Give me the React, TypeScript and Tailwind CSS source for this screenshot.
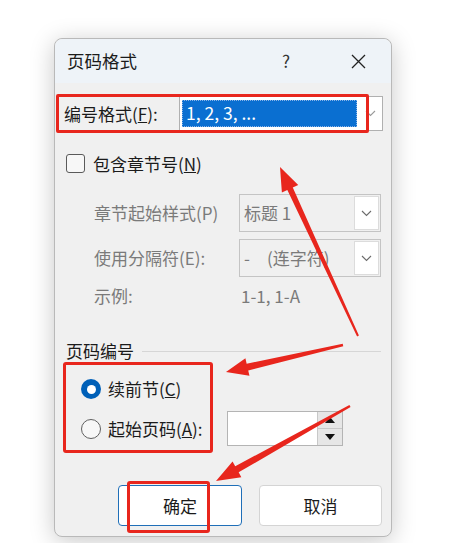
import React from 'react';

const RED = '#e8261d';

function arrowPoints(tip: [number, number], tail: [number, number], headLen: number, headHalf: number, neck: number, end: number) {
  const dx = tail[0] - tip[0];
  const dy = tail[1] - tip[1];
  const len = Math.hypot(dx, dy);
  const ux = dx / len;
  const uy = dy / len;
  const nx = -uy;
  const ny = ux;
  const bx = tip[0] + ux * headLen;
  const by = tip[1] + uy * headLen;
  const pts: [number, number][] = [
    tip,
    [bx + nx * headHalf, by + ny * headHalf],
    [bx + nx * neck, by + ny * neck],
    [tail[0] + nx * end, tail[1] + ny * end],
    [tail[0] - nx * end, tail[1] - ny * end],
    [bx - nx * neck, by - ny * neck],
    [bx - nx * headHalf, by - ny * headHalf],
  ];
  return pts.map((p) => p.join(',')).join(' ');
}

function Chevron({ color = '#6b6b6b' }: { color?: string }) {
  return (
    <svg width="11" height="7" viewBox="0 0 11 7">
      <path d="M1 1 L5.5 5.5 L10 1" fill="none" stroke={color} strokeWidth="1.1" />
    </svg>
  );
}

function DisabledSelect({ text }: { text: string }) {
  return (
    <div className="ml-auto flex h-[38px] w-[142px] items-center border border-[#c4c4c4] bg-[#f0f0f0] pl-[4px] pr-[1px]">
      <span className="text-[17px] text-[#7a7a7a]">{text}</span>
      <div className="ml-auto flex h-[34px] w-[25px] items-center justify-center border border-[#dcdcdc] bg-white">
        <Chevron />
      </div>
    </div>
  );
}

export default function App() {
  return (
    <div
      className="relative h-[543px] w-[455px] overflow-hidden bg-white text-[#1b1b1b]"
      style={{ fontFamily: '"Noto Sans CJK SC", "Noto Sans", sans-serif' }}
    >
      <div className="pl-[54px] pt-[38px]">
        <div className="flex h-[499px] w-[338px] flex-col rounded-[8px] border border-[#b9b9b9] bg-[#f0f0f0] shadow-[0_4px_24px_rgba(0,0,0,0.22)]">
          {/* title bar */}
          <div className="flex h-[44px] items-center rounded-t-[8px] bg-[#eef3f8] pl-[12px]">
            <span className="text-[17.5px]">页码格式</span>
            <span className="ml-[145px] text-[17px] text-[#333]">?</span>
            <svg className="ml-[61px]" width="15" height="15" viewBox="0 0 15 15">
              <path d="M1 1 L14 14 M14 1 L1 14" stroke="#222" strokeWidth="1.3" />
            </svg>
          </div>

          {/* number format */}
          <div className="mt-[13px] flex h-[35px] items-center pl-[9px]">
            <span className="w-[115px] text-[17px]">
              编号格式(<span className="underline">F</span>):
            </span>
            <div className="flex h-[35px] w-[204px] items-center border border-[#b0b0b0] bg-white pl-[2px] pr-[6px]">
              <div className="flex h-[27px] w-[175px] items-center border border-dotted border-[#8ab4e8] bg-[#0a6fd1] pl-[3px] text-[17.5px] text-white">
                1, 2, 3, ...
              </div>
              <div className="ml-auto">
                <Chevron color="#9a9a9a" />
              </div>
            </div>
          </div>

          {/* include chapter */}
          <div className="mt-[23px] flex h-[19px] items-center pl-[11px]">
            <div className="h-[19px] w-[19px] rounded-[3px] border border-[#5a5a5a] bg-[#f7f7f7]" />
            <span className="ml-[8px] text-[17px]">
              包含章节号(<span className="underline">N</span>)
            </span>
          </div>

          <div className="mt-[21px] flex h-[38px] items-center pl-[39px] pr-[10px]">
            <span className="text-[17px] text-[#7a7a7a]">章节起始样式(P)</span>
            <DisabledSelect text="标题 1" />
          </div>

          <div className="mt-[7px] flex h-[38px] items-center pl-[39px] pr-[10px]">
            <span className="text-[17px] text-[#7a7a7a]">使用分隔符(E):</span>
            <DisabledSelect text="-　(连字符)" />
          </div>

          <div className="mt-[7px] flex h-[24px] items-center pl-[39px] text-[17px] text-[#7a7a7a]">
            <span className="w-[147px]">示例:</span>
            <span>1-1, 1-A</span>
          </div>

          {/* page numbering */}
          <div className="mt-[31px] flex h-[24px] items-center pl-[11px] pr-[10px]">
            <span className="text-[17px]">页码编号</span>
            <div className="ml-[8px] h-px flex-1 bg-[#d6d6d6]" />
          </div>

          <div className="mt-[16px] flex h-[20px] items-center pl-[26px]">
            <div className="flex h-[20px] w-[20px] items-center justify-center rounded-full bg-[#0060b8]">
              <div className="h-[9px] w-[9px] rounded-full bg-white" />
            </div>
            <span className="ml-[7px] text-[17px]">
              续前节(<span className="underline">C</span>)
            </span>
          </div>

          <div className="mt-[12px] flex h-[35px] items-center pl-[26px]">
            <div className="h-[20px] w-[20px] rounded-full border border-[#606060] bg-[#f7f7f7]" />
            <span className="ml-[7px] w-[119px] text-[17px]">
              起始页码(<span className="underline">A</span>):
            </span>
            <div className="flex h-[35px] w-[116px] border border-[#b4b4b4] bg-white">
              <div className="ml-auto flex w-[25px] flex-col border-l border-[#c8c8c8]">
                <div className="flex flex-1 items-center justify-center border-b border-[#c8c8c8] bg-[#e6e6e6]">
                  <svg width="10" height="6" viewBox="0 0 10 6">
                    <path d="M0 6 L5 0 L10 6 Z" fill="#111" />
                  </svg>
                </div>
                <div className="flex flex-1 items-center justify-center bg-[#e6e6e6]">
                  <svg width="10" height="6" viewBox="0 0 10 6">
                    <path d="M0 0 L10 0 L5 6 Z" fill="#111" />
                  </svg>
                </div>
              </div>
            </div>
          </div>

          {/* buttons */}
          <div className="mt-[39px] flex gap-[17px] pl-[63px]">
            <button className="h-[41px] w-[124px] rounded-[4px] border border-[#1f6fb8] bg-white text-[17px]">确定</button>
            <button className="h-[41px] w-[123px] rounded-[4px] border border-[#d4d4d4] bg-white text-[17px]">取消</button>
          </div>
        </div>
      </div>

      {/* annotations */}
      <div className="pointer-events-none absolute left-[56px] top-[94px] h-[39px] w-[313px] rounded-[2px] border-[3px] border-[#e8261d]" />
      <div className="pointer-events-none absolute left-[63px] top-[362px] h-[91px] w-[150px] rounded-[3px] border-[3px] border-[#e8261d]" />
      <div className="pointer-events-none absolute left-[127px] top-[481px] h-[52px] w-[83px] rounded-[3px] border-[3px] border-[#e8261d]" />
      <svg className="pointer-events-none absolute left-0 top-0" width="455" height="543">
        <polygon points={arrowPoints([280, 167], [358, 336], 24, 9, 3, 1)} fill={RED} />
        <polygon points={arrowPoints([226, 372], [343, 345], 22, 9, 3.5, 1.2)} fill={RED} />
        <polygon points={arrowPoints([216, 481], [350, 406], 24, 9, 3.5, 1.2)} fill={RED} />
      </svg>
    </div>
  );
}
